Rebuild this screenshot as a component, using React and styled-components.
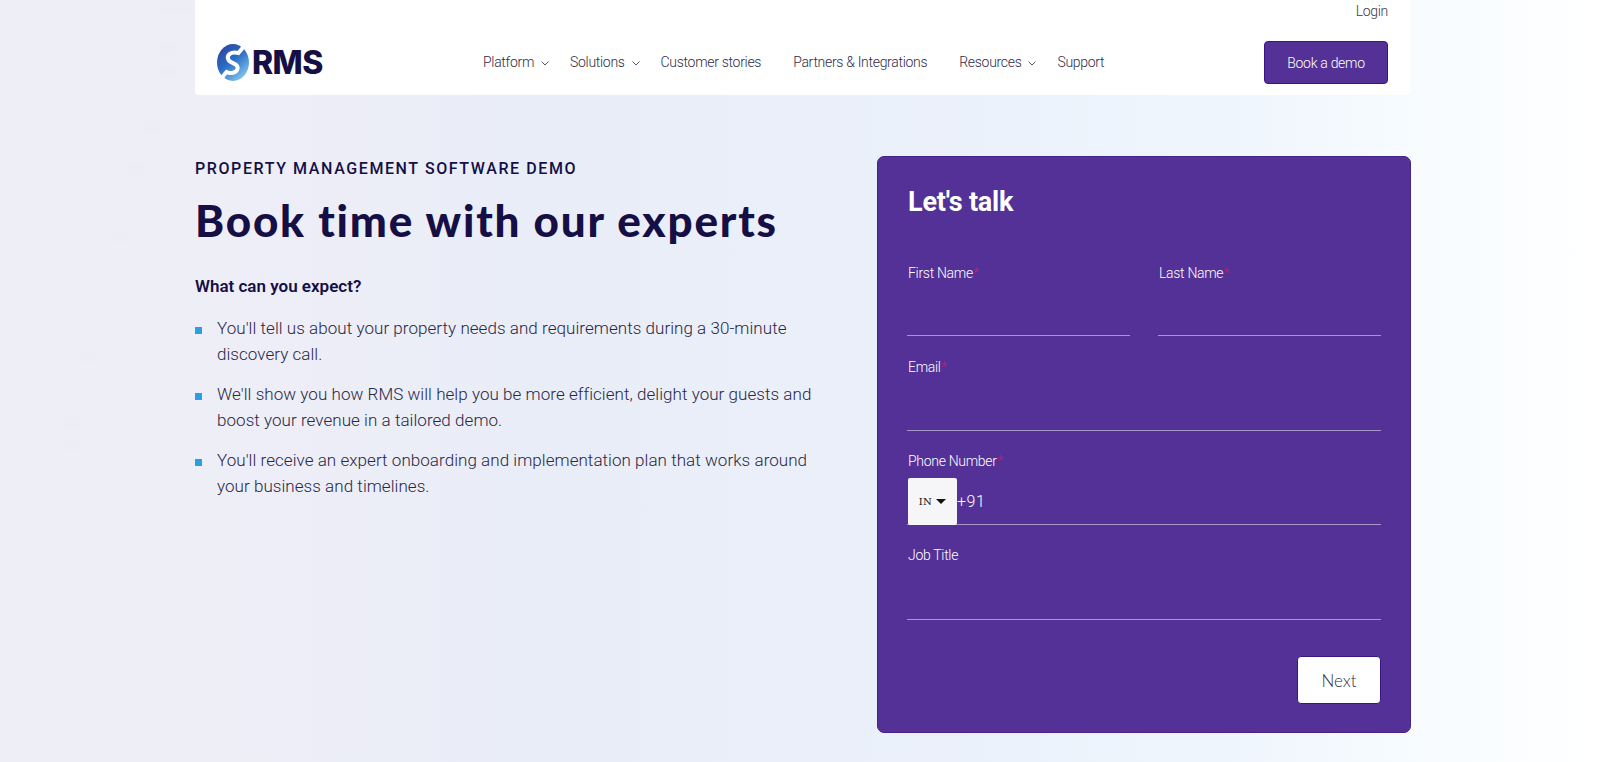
import React from "react";
import styled, { createGlobalStyle } from "styled-components";

const Global = createGlobalStyle`
  html, body { margin: 0; padding: 0; height: 762px; overflow: hidden; }
  body { font-family: Roboto, "Liberation Sans", sans-serif; color: #150f45; }
  * { box-sizing: border-box; }
`;

const tiles = [[160, 0, 32, 11], [160, 44, 16, 11], [160, 66, 16, 11], [144, 121, 16, 11], [128, 165, 16, 11], [112, 231, 16, 11], [80, 351, 16, 11], [64, 417, 16, 11], [64, 439, 16, 11]];
const tileLayers = tiles
  .map(([x, y, w, h]) => `linear-gradient(#ededf4, #ededf4) ${x}px ${y}px / ${w}px ${h}px no-repeat`)
  .join(", ");

const Page = styled.div`
  height: 762px;
  background: ${tileLayers}, linear-gradient(90deg, #eeeef7 0%, #eeeef7 14%, #e9edf8 35%, #ebf1fb 60%, #f0f6fd 78%, #f8fcff 90%, #ffffff 100%);
`;
const Container = styled.div`
  width: 1216px;
  margin-left: 195px;
`;
const Header = styled.header`
  height: 95px;
  background: #fff;
  border-radius: 0 0 4px 4px;
  padding: 0 23px 0 22px;
`;
const TopBar = styled.div`
  height: 22px;
  display: flex;
  justify-content: flex-end;
  align-items: center;
`;
const LoginLink = styled.a`
  font-size: 14px;
  font-weight: 300;
  letter-spacing: -0.3px;
  color: #3a3850;
`;
const MainBar = styled.div`
  height: 43px;
  margin-top: 19px;
  display: flex;
  align-items: center;
`;
const Logo = styled.div`
  width: 266px;
  display: flex;
  align-items: center;
`;
const LogoText = styled.span`
  font-family: Inter, sans-serif;
  font-weight: 800;
  font-size: 32px;
  letter-spacing: -0.6px;
  color: #150f45;
  margin-left: 3px;
`;
const Nav = styled.nav`
  display: flex;
  align-items: center;
  margin-top: -1px;
`;
const NavItem = styled.a`
  display: flex;
  align-items: center;
  font-size: 14px;
  font-weight: 300;
  letter-spacing: -0.3px;
  color: #2e2c48;
  margin-right: ${(p) => p.$gap}px;
  white-space: nowrap;
`;
const Chevron = styled.svg`
  width: 8px;
  height: 5px;
  margin-left: 7px;
  margin-top: 2px;
`;
const DemoButton = styled.a`
  margin-left: auto;
  width: 124px;
  height: 43px;
  display: flex;
  align-items: center;
  justify-content: center;
  background: #533197;
  border: 1px solid #3a1585;
  border-radius: 4px;
  color: #fff;
  font-size: 14px;
  font-weight: 300;
  letter-spacing: -0.3px;
`;
const Content = styled.main`
  display: flex;
  justify-content: space-between;
  padding-top: 61px;
`;
const Left = styled.section`
  width: 625px;
`;
const Eyebrow = styled.div`
  font-size: 16px;
  font-weight: 500;
  letter-spacing: 1.6px;
  line-height: 24px;
  color: #150f45;
  margin-top: 1px;
`;
const Title = styled.h1`
  font-family: Lato, sans-serif;
  font-weight: 900;
  font-size: 44px;
  line-height: 56px;
  letter-spacing: 1.8px;
  color: #150f45;
  margin: 11px 0 0;
`;
const Sub = styled.h3`
  font-size: 17px;
  font-weight: 600;
  line-height: 24px;
  color: #150f45;
  margin: 26px 0 0;
`;
const List = styled.ul`
  list-style: none;
  margin: 17px 0 0;
  padding: 0;
`;
const Item = styled.li`
  position: relative;
  padding-left: 22px;
  font-size: 17px;
  font-weight: 300;
  line-height: 26px;
  letter-spacing: 0.05px;
  color: #2a2745;
  margin-bottom: 14px;
  &::before {
    content: "";
    position: absolute;
    left: 0;
    top: 12px;
    width: 7px;
    height: 7px;
    background: #2a9fe3;
  }
`;
const Card = styled.section`
  width: 534px;
  height: 577px;
  background: #533197;
  border-radius: 7px;
  border: 1px solid #47228c;
  padding: 0 29px;
`;
const CardTitle = styled.h2`
  font-size: 27px;
  font-weight: 700;
  line-height: 32px;
  color: #fff;
  margin: 29px 0 0 1px;
  letter-spacing: -0.2px;
`;
const Form = styled.form`
  display: grid;
  grid-template-columns: 1fr 1fr;
  column-gap: 28px;
  margin-top: 45px;
`;
const Field = styled.div`
  grid-column: ${(p) => (p.$full ? "1 / -1" : "auto")};
  height: 94px;
  display: flex;
  flex-direction: column;
`;
const Label = styled.label`
  font-size: 14px;
  font-weight: 300;
  line-height: 20px;
  letter-spacing: -0.3px;
  padding-left: 1px;
  color: #fff;
`;
const Star = styled.span`
  color: #d6164f;
`;
const Underline = styled.div`
  height: ${(p) => p.$h || 54}px;
  border-bottom: 1px solid #a596cc;
`;
const PhoneRow = styled.div`
  margin-top: -1px;
  height: 55px;
  display: flex;
  align-items: flex-end;
  border-bottom: 1px solid #a596cc;
`;
const FlagBox = styled.div`
  width: 49px;
  height: 47px;
  margin: 0 0 -1px 1px;
  background: #f6f6f8;
  border-radius: 2px;
  display: flex;
  align-items: center;
  justify-content: center;
  gap: 4px;
`;
const FlagCode = styled.span`
  font-family: "DejaVu Serif", serif;
  font-size: 10px;
  letter-spacing: 0.3px;
  color: #111;
`;
const Caret = styled.span`
  width: 0;
  height: 0;
  border-left: 5px solid transparent;
  border-right: 5px solid transparent;
  border-top: 5px solid #111;
`;
const Dial = styled.span`
  font-size: 16px;
  font-weight: 300;
  color: #fff;
  line-height: 44px;
  letter-spacing: 0.5px;
`;
const Actions = styled.div`
  display: flex;
  justify-content: flex-end;
  margin-top: 17px;
`;
const NextButton = styled.button`
  width: 84px;
  height: 48px;
  background: #fff;
  border: 1px solid #3a1585;
  border-radius: 4px;
  font-family: Lato, sans-serif;
  font-size: 17px;
  font-weight: 300;
  color: #2e2c48;
  padding: 0;
`;

const Down = () => (
  <Chevron viewBox="0 0 8 5" fill="none" stroke="#55536a" strokeWidth="1">
    <path d="M0.5 0.5 L4 4 L7.5 0.5" />
  </Chevron>
);

const LogoMark = () => (
  <svg width="32" height="39" viewBox="0 0 32 39">
    <defs>
      <linearGradient id="ring" x1="0.1" y1="0.1" x2="0.75" y2="1">
        <stop offset="0" stopColor="#2e46a4" />
        <stop offset="0.45" stopColor="#2a6cc4" />
        <stop offset="1" stopColor="#86c9ef" />
      </linearGradient>
    </defs>
    <ellipse cx="16" cy="19.5" rx="16" ry="18.5" fill="url(#ring)" />
    <path
      d="M28 2 L21.5 10 C14 8 9 12 11.5 17 C13.5 21 22 20 20.5 26 C19.5 30 13 31 9.5 29 L3 37"
      fill="none"
      stroke="#fff"
      strokeWidth="4"
    />
    <path d="M22 0 H32 V5 L26 6 Z M0 39 H10 L6 33 L0 34 Z" fill="#fff" />
  </svg>
);

export default function App() {
  return (
    <Page>
      <Global />
      <Container>
        <Header>
          <TopBar>
            <LoginLink>Login</LoginLink>
          </TopBar>
          <MainBar>
            <Logo>
              <LogoMark />
              <LogoText>RMS</LogoText>
            </Logo>
            <Nav>
              <NavItem $gap={21}>Platform<Down /></NavItem>
              <NavItem $gap={21}>Solutions<Down /></NavItem>
              <NavItem $gap={32}>Customer stories</NavItem>
              <NavItem $gap={32}>Partners &amp; Integrations</NavItem>
              <NavItem $gap={21}>Resources<Down /></NavItem>
              <NavItem $gap={0}>Support</NavItem>
            </Nav>
            <DemoButton>Book a demo</DemoButton>
          </MainBar>
        </Header>
        <Content>
          <Left>
            <Eyebrow>PROPERTY MANAGEMENT SOFTWARE DEMO</Eyebrow>
            <Title>Book time with our experts</Title>
            <Sub>What can you expect?</Sub>
            <List>
              <Item>You'll tell us about your property needs and requirements during a 30-minute discovery call.</Item>
              <Item>We'll show you how RMS will help you be more efficient, delight your guests and boost your revenue in a tailored demo.</Item>
              <Item>You'll receive an expert onboarding and implementation plan that works around your business and timelines.</Item>
            </List>
          </Left>
          <Card>
            <CardTitle>Let's talk</CardTitle>
            <Form>
              <Field>
                <Label>First Name<Star>*</Star></Label>
                <Underline $h={53} />
              </Field>
              <Field>
                <Label>Last Name<Star>*</Star></Label>
                <Underline $h={53} />
              </Field>
              <Field $full>
                <Label>Email<Star>*</Star></Label>
                <Underline />
              </Field>
              <Field $full>
                <Label>Phone Number<Star>*</Star></Label>
                <PhoneRow>
                  <FlagBox><FlagCode>IN</FlagCode><Caret /></FlagBox>
                  <Dial>+91</Dial>
                </PhoneRow>
              </Field>
              <Field $full>
                <Label>Job Title</Label>
                <Underline $h={55} />
              </Field>
            </Form>
            <Actions>
              <NextButton type="button">Next</NextButton>
            </Actions>
          </Card>
        </Content>
      </Container>
    </Page>
  );
}
